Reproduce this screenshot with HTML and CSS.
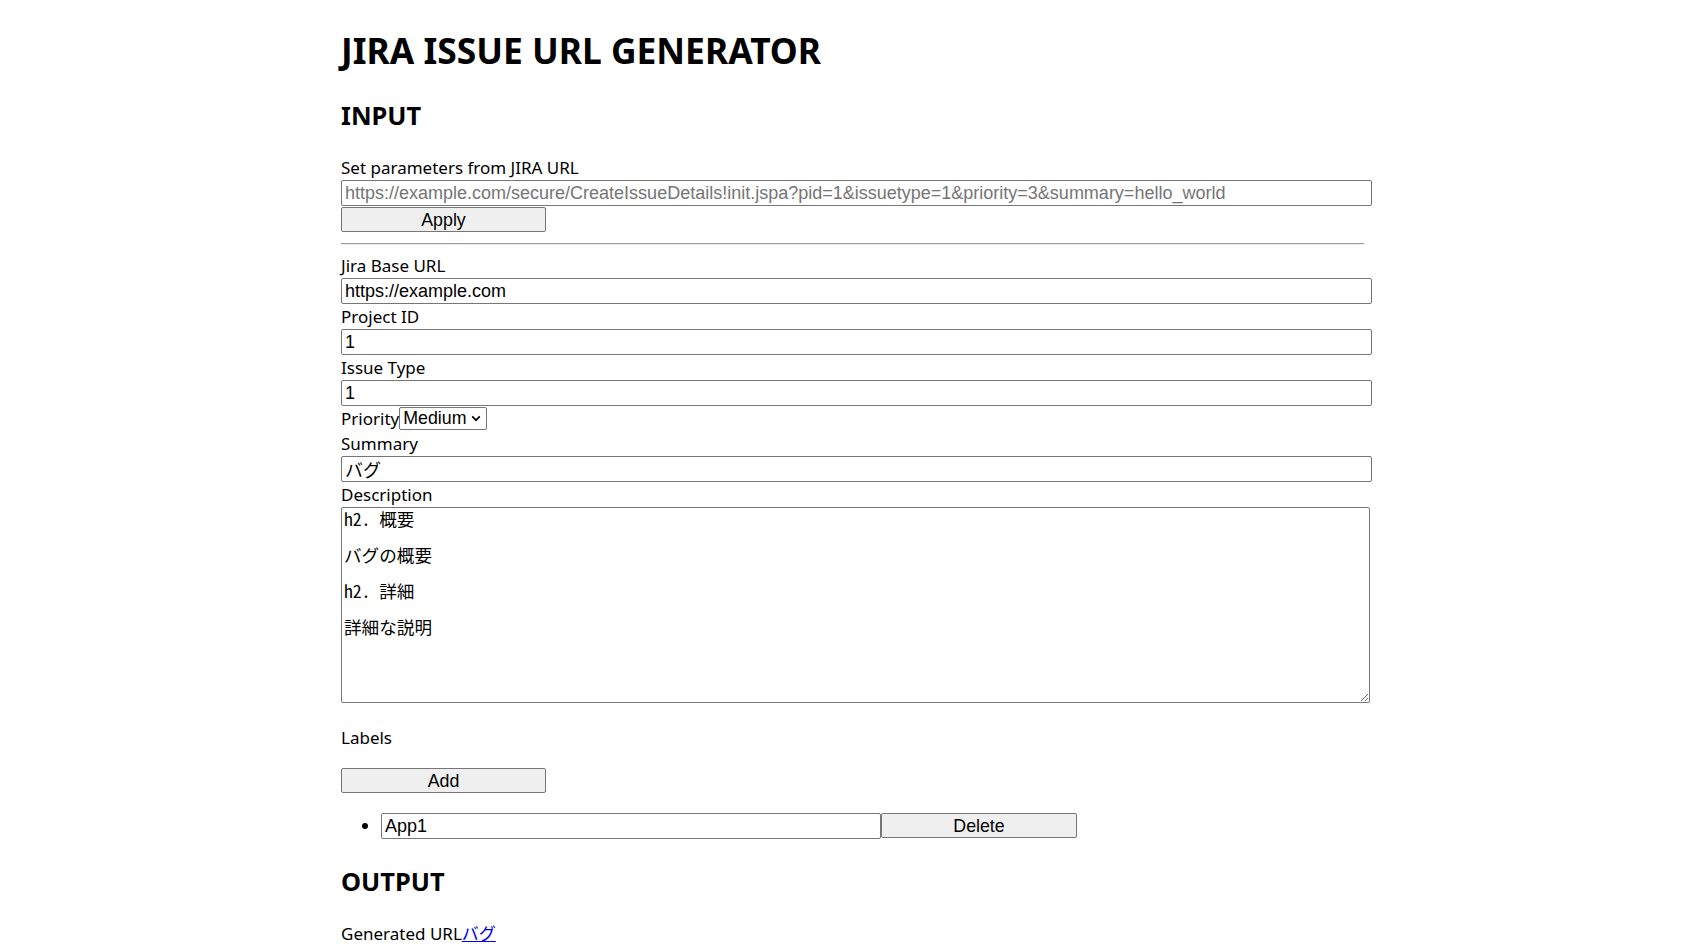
FILE: index.html
```html
<!DOCTYPE html>
<html lang="ja">
<head>
<meta charset="utf-8">
<title>JIRA ISSUE URL GENERATOR</title>
<link rel="stylesheet" href="styles.css">
</head>
<body>
<div class="container">
  <h1 class="title">JIRA ISSUE URL GENERATOR</h1>
  <h2 class="section">INPUT</h2>

  <label class="label first" for="src">Set parameters from JIRA URL</label>
  <input class="text" id="src" type="text" placeholder="https://example.com/secure/CreateIssueDetails!init.jspa?pid=1&amp;issuetype=1&amp;priority=3&amp;summary=hello_world">
  <button class="btn apply" type="button">Apply</button>
  <hr class="rule">

  <label class="label" for="base">Jira Base URL</label>
  <input class="text" id="base" type="text" value="https://example.com">
  <label class="label" for="pid">Project ID</label>
  <input class="text" id="pid" type="text" value="1">
  <label class="label" for="itype">Issue Type</label>
  <input class="text" id="itype" type="text" value="1">
  <div class="priority-row">
    <label class="label inline" for="prio">Priority</label>
    <div class="select">
      <span class="select-text">Medium</span>
      <svg class="chev" width="10" height="7" viewBox="0 0 10 7"><path d="M1.2 1.4 L5 5.2 L8.8 1.4" fill="none" stroke="#000" stroke-width="1.7"/></svg>
    </div>
  </div>
  <label class="label" for="sum">Summary</label>
  <input class="text jp" id="sum" type="text" value="バグ">
  <label class="label" for="desc">Description</label>
  <textarea class="desc" id="desc">h2. 概要

バグの概要

h2. 詳細

詳細な説明</textarea>

  <p class="labels-title">Labels</p>
  <button class="btn add" type="button">Add</button>
  <ul class="label-list">
    <li class="label-item"><input class="text label-input" type="text" value="App1"><button class="btn del" type="button">Delete</button></li>
  </ul>

  <h2 class="section output">OUTPUT</h2>
  <p class="generated">Generated URL<a class="link" href="#">バグ</a></p>
</div>
</body>
</html>
```
FILE: styles.css
```css
html, body {
  margin: 0;
  padding: 0;
  background: #fff;
}
body {
  font-family: "Noto Sans", "Open Sans", "Noto Sans CJK JP", sans-serif;
  font-size: 17px;
  line-height: 25px;
  color: #000;
}
.container {
  width: 60%;
  margin: 0 auto;
  padding-top: 26px;
}
.title {
  margin: 0;
  font-size: 35.4px;
  line-height: 48px;
  font-weight: 700;
}
.section {
  margin: 24px 0 0;
  font-size: 25.4px;
  line-height: 35px;
  font-weight: 700;
}
.label {
  display: block;
  height: 25px;
  line-height: 25px;
}
.label.first {
  margin-top: 22px;
}
.text {
  display: block;
  box-sizing: border-box;
  width: calc(100% + 8px);
  height: 26px;
  margin: 0;
  padding: 0 3px;
  border: 1px solid #767676;
  border-radius: 2px;
  font-family: "Liberation Sans", Arial, "Noto Sans CJK JP", sans-serif;
  font-size: 18px;
  color: #000;
  background: #fff;
  outline: none;
}
.text::placeholder {
  color: #757575;
}
.text.jp {
  font-family: "Liberation Sans", "Noto Sans CJK JP", sans-serif;
}
.btn {
  display: block;
  box-sizing: border-box;
  height: 25px;
  margin: 0;
  padding: 0;
  border: 1px solid #767676;
  border-radius: 2px;
  background: #efefef;
  font-family: "Liberation Sans", Arial, sans-serif;
  font-size: 17.8px;
  color: #000;
  line-height: 22px;
}
.apply {
  width: 205px;
  margin-top: 1px;
}
.rule {
  margin: 11px 0 8px 0;
  border: 0;
  border-top: 1px solid #9a9a9a;
  border-bottom: 1px solid #eeeeee;
  height: 0;
}
.priority-row {
  display: flex;
  align-items: center;
  height: 25px;
}
.label.inline {
  display: inline-block;
}
.select {
  box-sizing: border-box;
  display: flex;
  align-items: center;
  justify-content: space-between;
  width: 88px;
  height: 23px;
  padding: 0 5px 0 3px;
  border: 1px solid #767676;
  border-radius: 2px;
  font-family: "Liberation Sans", Arial, sans-serif;
  font-size: 17.8px;
  line-height: 21px;
}
.chev {
  display: block;
}
.desc {
  display: block;
  box-sizing: border-box;
  width: calc(100% + 6px);
  height: 196px;
  margin: 0;
  padding: 2px;
  border: 1px solid #767676;
  border-radius: 2px;
  font-family: "Noto Sans Mono CJK JP", "Noto Sans CJK JP", monospace;
  font-size: 17.6px;
  line-height: 18px;
  color: #000;
  resize: vertical;
  outline: none;
}
.labels-title {
  margin: 22px 0 0;
}
.add {
  width: 205px;
  margin-top: 18px;
}
.label-list {
  margin: 20px 0 0;
  padding-left: 40px;
}
.label-item {
  list-style: disc;
  display: list-item;
  height: 26px;
}
.label-input {
  display: inline-block;
  vertical-align: top;
  width: 500px;
}
.del {
  display: inline-block;
  vertical-align: top;
  width: 196px;
  height: 25px;
}
.output {
  margin-top: 25px;
}
.generated {
  margin: 21px 0 0;
}
.link {
  color: #0000ee;
  text-decoration: underline;
  font-family: "Noto Sans CJK JP", sans-serif;
}
```
